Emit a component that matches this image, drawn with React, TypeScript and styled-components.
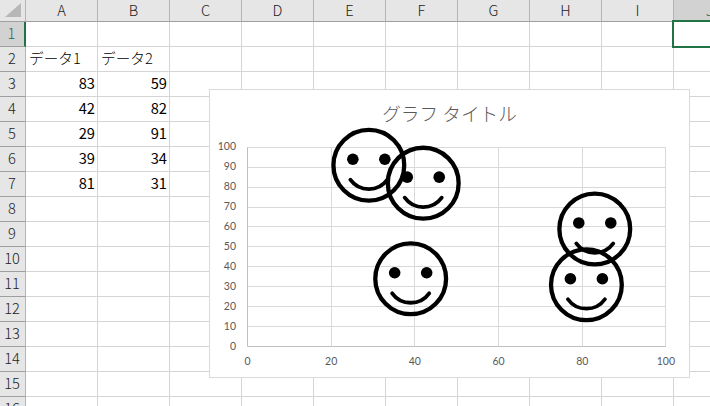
import styled, { createGlobalStyle } from "styled-components";

const GlobalStyle = createGlobalStyle`
  html, body {
    margin: 0;
    padding: 0;
    background: #fff;
  }
`;

const COLUMNS = ["A", "B", "C", "D", "E", "F", "G", "H", "I", "J"];
const ROW_COUNT = 16;
const CELLS: Record<string, { text: string; numeric?: boolean }> = {
  A2: { text: "データ1" },
  B2: { text: "データ2" },
  A3: { text: "83", numeric: true },
  B3: { text: "59", numeric: true },
  A4: { text: "42", numeric: true },
  B4: { text: "82", numeric: true },
  A5: { text: "29", numeric: true },
  B5: { text: "91", numeric: true },
  A6: { text: "39", numeric: true },
  B6: { text: "34", numeric: true },
  A7: { text: "81", numeric: true },
  B7: { text: "31", numeric: true },
};
const POINTS = [
  [83, 59],
  [42, 82],
  [29, 91],
  [39, 34],
  [81, 31],
];

const PLOT_LEFT = 37.5;
const PLOT_WIDTH = 418.4;
const PLOT_BOTTOM = 213.5;
const PLOT_HEIGHT = 199.2;
const xAt = (v: number) => PLOT_LEFT + (v / 100) * PLOT_WIDTH;
const yAt = (v: number) => PLOT_BOTTOM - (v / 100) * PLOT_HEIGHT;

const Smiley = ({ x, y }: { x: number; y: number }) => (
  <g transform={`translate(${xAt(x)} ${yAt(y)})`}>
    <circle r="35.4" fill="none" stroke="#000" strokeWidth="4.3" />
    <circle cx="-16" cy="-6" r="5.8" fill="#000" />
    <circle cx="16" cy="-6" r="5.8" fill="#000" />
    <path d="M-18.5 14.5A22.8 22.8 0 0 0 18.5 14.5" fill="none" stroke="#000" strokeWidth="3.8" strokeLinecap="round" />
  </g>
);

const ScatterChart = () => {
  const xTicks = [0, 20, 40, 60, 80, 100];
  const yTicks = [0, 10, 20, 30, 40, 50, 60, 70, 80, 90, 100];
  return (
    <ChartSvg width="479" height="244" viewBox="0 0 479 244">
      {yTicks.map((t) => (
        <line key={t} x1={PLOT_LEFT} x2={xAt(100)} y1={Math.floor(yAt(t)) + 0.5} y2={Math.floor(yAt(t)) + 0.5} stroke={t === 0 ? "#bfbfbf" : "#d9d9d9"} />
      ))}
      {xTicks.map((t) => (
        <line key={t} x1={Math.floor(xAt(t)) + 0.5} x2={Math.floor(xAt(t)) + 0.5} y1={yAt(100)} y2={yAt(0)} stroke={t === 0 ? "#bfbfbf" : "#d9d9d9"} />
      ))}
      {yTicks.map((t) => (
        <AxisLabel key={t} x={26} y={yAt(t) + 3} textAnchor="end">
          {t}
        </AxisLabel>
      ))}
      {xTicks.map((t) => (
        <AxisLabel key={t} x={xAt(t)} y={yAt(0) + 18.5} textAnchor="middle">
          {t}
        </AxisLabel>
      ))}
      {POINTS.map(([x, y]) => (
        <Smiley key={x} x={x} y={y} />
      ))}
    </ChartSvg>
  );
};

const App = () => {
  return (
    <Sheet>
      <GlobalStyle />
      <HeaderRow>
        <Corner>
          <CornerMark />
        </Corner>
        {COLUMNS.map((col) => (
          <ColumnHeader key={col} $active={col === "J"}>
            {col}
          </ColumnHeader>
        ))}
      </HeaderRow>
      {Array.from({ length: ROW_COUNT }, (_, i) => i + 1).map((row) => (
        <Row key={row}>
          <RowHeader $active={row === 1}>{row}</RowHeader>
          {COLUMNS.map((col) => {
            const cell = CELLS[`${col}${row}`];
            return (
              <Cell key={col} $numeric={cell?.numeric}>
                {cell?.text}
              </Cell>
            );
          })}
        </Row>
      ))}
      <SelectionBox />
      <Chart>
        <ChartTitle>グラフ タイトル</ChartTitle>
        <ScatterChart />
      </Chart>
    </Sheet>
  );
};

export default App;

const Sheet = styled.div`
  position: relative;
  width: 710px;
  height: 406px;
  overflow: hidden;
  background: #fff;
  font-family: "Noto Sans CJK JP", "Liberation Sans", sans-serif;
  font-size: 14.67px;
  color: #000;
`;
const HeaderRow = styled.div`
  display: flex;
  height: 22px;
`;
const Corner = styled.div`
  flex: none;
  box-sizing: border-box;
  width: 26px;
  height: 22px;
  background: #e6e6e6;
  border-right: 1px solid #b4b4b4;
  border-bottom: 1px solid #9f9f9f;
  padding: 3px 0 0 5px;
`;
const CornerMark = styled.div`
  width: 16px;
  height: 14px;
  background: #b7b7b7;
  clip-path: polygon(100% 0, 100% 100%, 0 100%);
`;
const ColumnHeader = styled.div<{ $active?: boolean }>`
  flex: none;
  box-sizing: border-box;
  width: 72px;
  height: 22px;
  padding-bottom: 3px;
  display: flex;
  align-items: center;
  justify-content: center;
  font-weight: 300;
  background: ${({ $active }) => ($active ? "#d2d2d2" : "#e6e6e6")};
  border-right: 1px solid #b4b4b4;
  border-bottom: 1px solid #9f9f9f;
  color: ${({ $active }) => ($active ? "#1e6b43" : "#222")};
`;
const Row = styled.div`
  display: flex;
  height: 25px;
`;
const RowHeader = styled.div<{ $active?: boolean }>`
  flex: none;
  box-sizing: border-box;
  width: 26px;
  height: 25px;
  padding: 0 1px 3px 0;
  display: flex;
  align-items: center;
  justify-content: center;
  font-weight: 300;
  background: ${({ $active }) => ($active ? "#d2d2d2" : "#e6e6e6")};
  border-right: ${({ $active }) => ($active ? "2px solid #217346" : "1px solid #b4b4b4")};
  border-bottom: 1px solid #9f9f9f;
  color: ${({ $active }) => ($active ? "#1e6b43" : "#222")};
`;
const Cell = styled.div<{ $numeric?: boolean }>`
  flex: none;
  box-sizing: border-box;
  width: 72px;
  height: 25px;
  display: flex;
  align-items: center;
  justify-content: ${({ $numeric }) => ($numeric ? "flex-end" : "flex-start")};
  padding: 0 2px 3px 3px;
  font-weight: ${({ $numeric }) => ($numeric ? 400 : 300)};
  border-right: 1px solid #d4d4d4;
  border-bottom: 1px solid #d4d4d4;
  white-space: nowrap;
`;
const SelectionBox = styled.div`
  position: absolute;
  top: 20px;
  left: 672px;
  box-sizing: border-box;
  width: 80px;
  height: 28px;
  border: 2px solid #217346;
`;
const Chart = styled.div`
  position: absolute;
  top: 89px;
  left: 209px;
  box-sizing: border-box;
  width: 481px;
  height: 289px;
  background: #fff;
  border: 1px solid #d9d9d9;
`;
const ChartTitle = styled.div`
  height: 43px;
  padding-top: 9px;
  box-sizing: border-box;
  text-align: center;
  font-size: 18.67px;
  line-height: 28px;
  font-weight: 300;
  color: #595959;
`;
const ChartSvg = styled.svg`
  display: block;
  overflow: visible;
`;
const AxisLabel = styled.text`
  font-family: Lato, "Liberation Sans", sans-serif;
  font-size: 10.5px;
  fill: #595959;
`;
